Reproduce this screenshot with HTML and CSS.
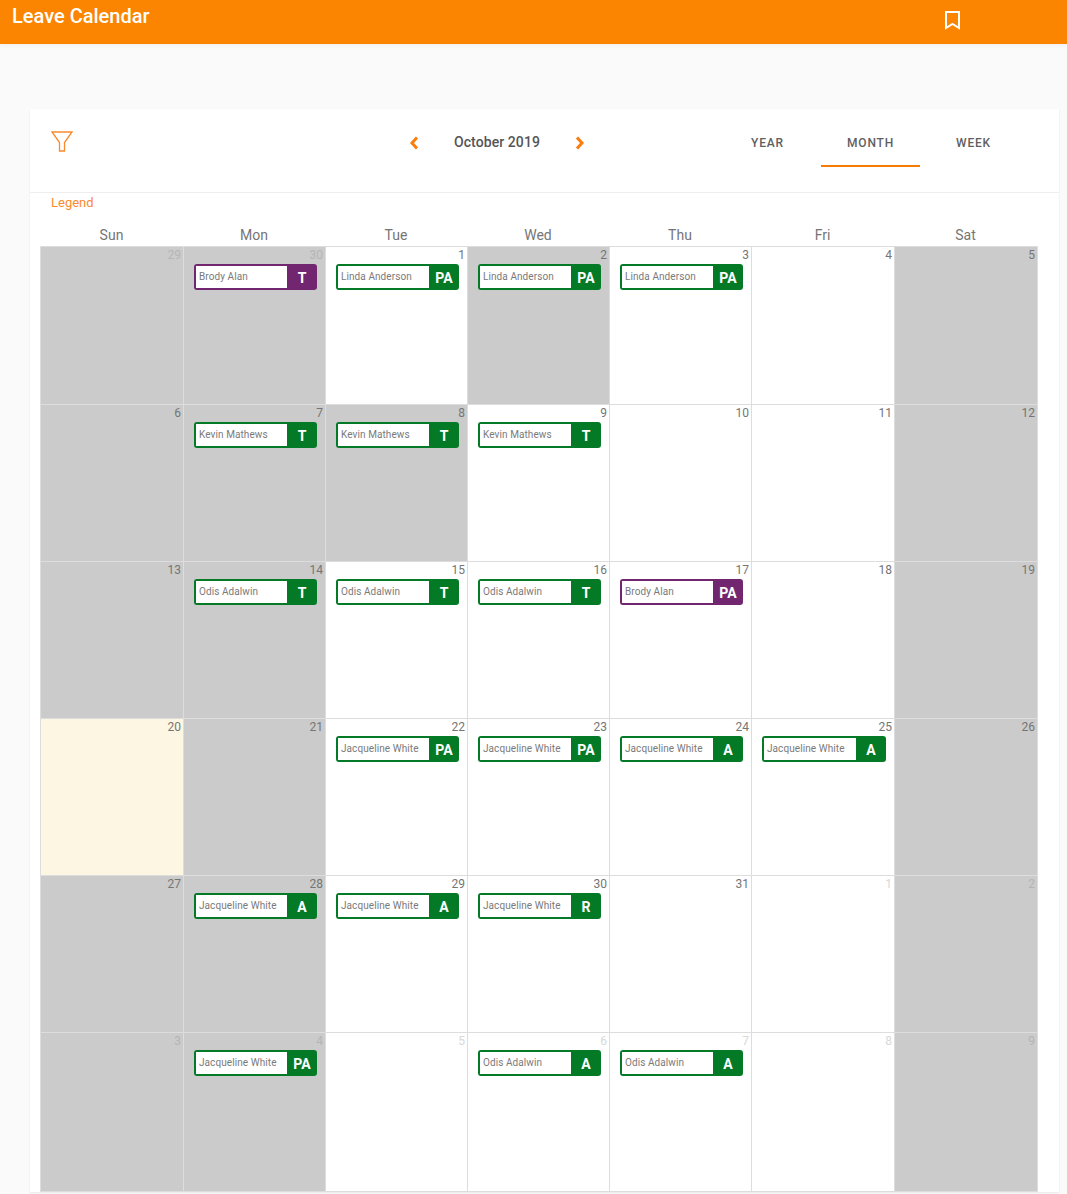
FILE: index.html
```html
<!DOCTYPE html>
<html lang="en">
<head>
<meta charset="utf-8">
<title>Leave Calendar</title>
<link rel="stylesheet" href="styles.css">
</head>
<body>
<header class="appbar">
  <h1 class="appbar-title">Leave Calendar</h1>
  <svg class="bookmark" width="16" height="19" viewBox="0 0 16 19"><path d="M1 1h13v16l-6.500-4-6.500 4z" fill="none" stroke="#fff" stroke-width="2"/></svg>
</header>
<main class="card">
  <div class="toolbar">
    <svg class="filter" width="22" height="21" viewBox="0 0 22 21"><path d="M1 1h20l-7.500 10.500V20h-5V11.500z" fill="none" stroke="#fb8a2e" stroke-width="1.300"/></svg>
    <div class="month-nav">
      <svg class="chev" width="10" height="14" viewBox="0 0 10 14"><path d="M8 1.500 3 7l5 5.500" fill="none" stroke="#fb7d0c" stroke-width="3"/></svg>
      <span class="month-label">October 2019</span>
      <svg class="chev" width="10" height="14" viewBox="0 0 10 14"><path d="M2 1.500 7 7l-5 5.500" fill="none" stroke="#fb7d0c" stroke-width="3"/></svg>
    </div>
    <nav class="tabs">
      <span class="tab">YEAR</span>
      <span class="tab active">MONTH</span>
      <span class="tab">WEEK</span>
    </nav>
  </div>
  <div class="legend">Legend</div>
  <div class="calendar">
    <div class="weekdays">
      <span>Sun</span><span>Mon</span><span>Tue</span><span>Wed</span><span>Thu</span><span>Fri</span><span>Sat</span>
    </div>
    <div class="grid">
      <div class="cell off other"><span class="num">29</span></div>
      <div class="cell off other"><span class="num">30</span><div class="chip purple"><span class="name">Brody Alan</span><span class="code">T</span></div></div>
      <div class="cell"><span class="num">1</span><div class="chip"><span class="name">Linda Anderson</span><span class="code">PA</span></div></div>
      <div class="cell off"><span class="num">2</span><div class="chip"><span class="name">Linda Anderson</span><span class="code">PA</span></div></div>
      <div class="cell"><span class="num">3</span><div class="chip"><span class="name">Linda Anderson</span><span class="code">PA</span></div></div>
      <div class="cell"><span class="num">4</span></div>
      <div class="cell off"><span class="num">5</span></div>

      <div class="cell off"><span class="num">6</span></div>
      <div class="cell off"><span class="num">7</span><div class="chip"><span class="name">Kevin Mathews</span><span class="code">T</span></div></div>
      <div class="cell off"><span class="num">8</span><div class="chip"><span class="name">Kevin Mathews</span><span class="code">T</span></div></div>
      <div class="cell"><span class="num">9</span><div class="chip"><span class="name">Kevin Mathews</span><span class="code">T</span></div></div>
      <div class="cell"><span class="num">10</span></div>
      <div class="cell"><span class="num">11</span></div>
      <div class="cell off"><span class="num">12</span></div>

      <div class="cell off"><span class="num">13</span></div>
      <div class="cell off"><span class="num">14</span><div class="chip"><span class="name">Odis Adalwin</span><span class="code">T</span></div></div>
      <div class="cell"><span class="num">15</span><div class="chip"><span class="name">Odis Adalwin</span><span class="code">T</span></div></div>
      <div class="cell"><span class="num">16</span><div class="chip"><span class="name">Odis Adalwin</span><span class="code">T</span></div></div>
      <div class="cell"><span class="num">17</span><div class="chip purple"><span class="name">Brody Alan</span><span class="code">PA</span></div></div>
      <div class="cell"><span class="num">18</span></div>
      <div class="cell off"><span class="num">19</span></div>

      <div class="cell today"><span class="num">20</span></div>
      <div class="cell off"><span class="num">21</span></div>
      <div class="cell"><span class="num">22</span><div class="chip"><span class="name">Jacqueline White</span><span class="code">PA</span></div></div>
      <div class="cell"><span class="num">23</span><div class="chip"><span class="name">Jacqueline White</span><span class="code">PA</span></div></div>
      <div class="cell"><span class="num">24</span><div class="chip"><span class="name">Jacqueline White</span><span class="code">A</span></div></div>
      <div class="cell"><span class="num">25</span><div class="chip"><span class="name">Jacqueline White</span><span class="code">A</span></div></div>
      <div class="cell off"><span class="num">26</span></div>

      <div class="cell off"><span class="num">27</span></div>
      <div class="cell off"><span class="num">28</span><div class="chip"><span class="name">Jacqueline White</span><span class="code">A</span></div></div>
      <div class="cell"><span class="num">29</span><div class="chip"><span class="name">Jacqueline White</span><span class="code">A</span></div></div>
      <div class="cell"><span class="num">30</span><div class="chip"><span class="name">Jacqueline White</span><span class="code">R</span></div></div>
      <div class="cell"><span class="num">31</span></div>
      <div class="cell other"><span class="num">1</span></div>
      <div class="cell off other"><span class="num">2</span></div>

      <div class="cell off other"><span class="num">3</span></div>
      <div class="cell off other"><span class="num">4</span><div class="chip"><span class="name">Jacqueline White</span><span class="code">PA</span></div></div>
      <div class="cell other"><span class="num">5</span></div>
      <div class="cell other"><span class="num">6</span><div class="chip"><span class="name">Odis Adalwin</span><span class="code">A</span></div></div>
      <div class="cell other"><span class="num">7</span><div class="chip"><span class="name">Odis Adalwin</span><span class="code">A</span></div></div>
      <div class="cell other"><span class="num">8</span></div>
      <div class="cell off other"><span class="num">9</span></div>
    </div>
  </div>
</main>
</body>
</html>
```
FILE: styles.css
```css
* { box-sizing: border-box; }
html, body { height: 1194px; overflow: hidden; }
body {
  margin: 0;
  background: #fafafa;
  font-family: Roboto, "Liberation Sans", sans-serif;
}
.appbar {
  height: 44px;
  background: #fb8500;
  box-shadow: 0 2px 4px rgba(0, 0, 0, .04);
  display: flex;
  justify-content: space-between;
  padding: 0 106px 0 12px;
}
.appbar-title {
  margin: 5px 0 0;
  font-size: 20px;
  line-height: 23px;
  font-weight: 500;
  color: #fff;
}
.bookmark { margin-top: 11px; }
.card {
  margin: 65px 8px 0 30px;
  height: 1083px;
  background: #fff;
  box-shadow: 0 1px 2px rgba(0, 0, 0, .08);
}
.toolbar {
  height: 84px;
  border-bottom: 1px solid #eee;
  display: flex;
  align-items: flex-start;
  padding: 0 36px 0 21px;
}
.filter { margin-top: 22px; }
.month-nav {
  display: flex;
  align-items: center;
  gap: 35px;
  margin: 25px 0 0 336px;
  height: 18px;
}
.month-label {
  position: relative;
  top: -1px;
  font-size: 14px;
  font-weight: 500;
  color: #555;
  letter-spacing: .08px;
}
.tabs {
  display: flex;
  gap: 4px;
  margin-left: auto;
}
.tab {
  width: 99px;
  height: 58px;
  padding-top: 27px;
  text-align: center;
  font-size: 12px;
  line-height: 14px;
  font-weight: 500;
  letter-spacing: .8px;
  color: #5f5f5f;
}
.tab.active { border-bottom: 2px solid #f57c00; }
.legend {
  padding-left: 21px;
  height: 20px;
  padding-top: 2px;
  font-size: 13px;
  line-height: 16px;
  color: #fb8a2e;
}
.calendar { padding: 13px 0 0 10px; width: 1008px; }
.weekdays {
  display: grid;
  grid-template-columns: 143px 142px 142px 142px 142px 143px 143px;
  height: 20px;
  font-size: 14px;
  line-height: 19px;
  text-align: center;
  color: #757575;
}
.grid {
  display: grid;
  grid-template-columns: 143px 142px 142px 142px 142px 143px 143px;
  grid-template-rows: 158px 157px 157px 157px 157px 159px;
  width: 998px;
  border-top: 1px solid #ddd;
  border-left: 1px solid #ddd;
}
.cell {
  border-right: 1px solid #ddd;
  border-bottom: 1px solid #ddd;
  background: #fff;
  padding: 1px 2px 0 10px;
}
.cell.off { background: #cbcbcb; }
.cell.today { background: #fdf6e3; }
.num {
  display: block;
  text-align: right;
  font-size: 12px;
  line-height: 15px;
  color: #757575;
}
.other .num { color: #d8d8d8; }
.cell.off.other .num { color: #b5b5b5; }
.chip {
  display: flex;
  width: calc(100% - 6px);
  height: 26px;
  margin-top: 1px;
  border: 2px solid #047a26;
  border-radius: 3px;
  background: #047a26;
}
.name {
  flex: 1;
  background: #fff;
  padding-left: 3px;
  height: 22px;
  font-size: 10px;
  line-height: 22px;
  letter-spacing: .08px;
  color: #7a7a7a;
  white-space: nowrap;
  overflow: hidden;
}
.code {
  width: 28px;
  padding-left: 2px;
  text-align: center;
  font-size: 14px;
  line-height: 25px;
  font-weight: 700;
  color: #fff;
}
.chip.purple { background: #722670; border-color: #722670; }
```
